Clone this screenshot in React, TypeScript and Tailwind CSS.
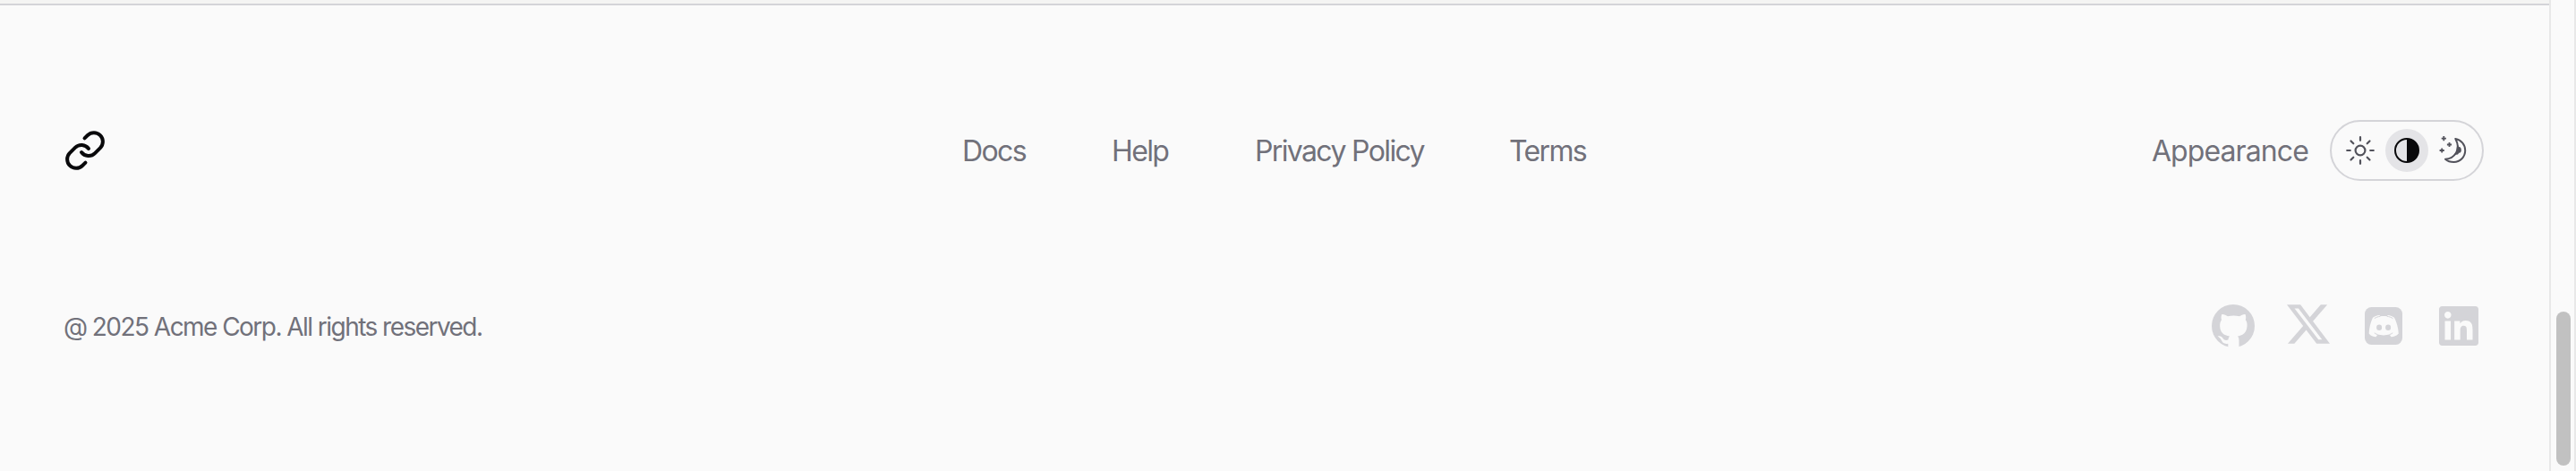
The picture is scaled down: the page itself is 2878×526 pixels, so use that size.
const links = [
  { label: "Docs", cls: "w-[70px] mr-[97px]" },
  { label: "Help", cls: "w-[64px] mr-[96px]" },
  { label: "Privacy Policy", cls: "w-[188px] mr-[96px]" },
  { label: "Terms", cls: "w-[83px]" },
];

function Sun() {
  return (
    <svg viewBox="0 0 32 32" className="size-8" fill="none" stroke="currentColor" strokeWidth="2.2" strokeLinecap="round">
      <circle cx="16" cy="16" r="5.4" />
      <path d="M16 1.200v3.600M16 27.200v3.600M1.200 16h3.600M27.200 16h3.600M5.500 5.500l2.800 2.800M23.700 23.700l2.800 2.800M5.500 26.500l2.800-2.800M23.700 8.300l2.800-2.800" />
    </svg>
  );
}

function Contrast() {
  return (
    <svg viewBox="0 0 32 32" className="size-8">
      <circle cx="16" cy="16" r="13" fill="none" stroke="currentColor" strokeWidth="2" />
      <path d="M16 3a13 13 0 0 1 0 26z" fill="currentColor" />
    </svg>
  );
}

function Moon() {
  return (
    <svg viewBox="0 0 32 32" className="size-8" fill="none" stroke="currentColor" strokeWidth="2" strokeLinejoin="round" strokeLinecap="round">
      <path d="M18.300 3C25 4.500 29.200 9.800 29.200 16C29.200 23.300 23.500 29 16.500 29C13 29 9.500 28 7 25.700C12 25.500 16.500 23 19 18.800C21.500 14.500 21.300 8.500 18.300 3Z" />
      <path d="M20.500 9L22.200 12C24 12 25.200 14 24.800 16.500C24.500 18.500 23 19 22 18.800C21.500 21 20 21 19 20.500L14 24.500L19 18Z" fill="currentColor" stroke="none" />
      <path d="M5.300 0v5.200M2.700 2.600h5.200M11.500 6.900v5.200M8.900 9.500h5.200M3.200 13.400v5.200M.6 16h5.200" strokeWidth="1.800" strokeLinecap="butt" />
    </svg>
  );
}

function Github() {
  return (
    <svg viewBox="0 0 48 48" className="size-12">
      <circle cx="24" cy="24" r="24" fill="currentColor" />
      <path
        d="M11.300 11C13.500 10.600 15.800 12 18 13.300C22 12.200 27 12.200 31 13.300C33.200 12 35.500 10.600 37.500 11C38.500 13.300 38.300 15.500 37.800 17.200C39.500 19.200 39.800 21.500 39.500 24.500C39 31.500 35 34.500 29 35.400C30.200 36.800 30.500 38.500 30.500 40.500V48H18.300V43.700C13.800 44.500 11.800 42.500 10.700 39.800C9.700 37.500 8 36.700 6.600 35.500C9.500 34.700 11.500 36 12.700 38C14.200 40.300 16.200 40.300 18.400 39.500C18.600 37.700 19.200 36.400 20 35.400C13.500 34.600 9.500 31.500 9.200 24.500C9 21.500 9.600 19.200 11 17.200C10.400 15.500 10.400 13.300 11.300 11Z"
        fill="#fafafa"
      />
    </svg>
  );
}

function XLogo() {
  return (
    <svg viewBox="0 0 24 24" className="-mt-1 size-12" fill="currentColor">
      <path d="M18.901 1.153h3.680l-8.040 9.190L24 22.846h-7.406l-5.800-7.584-6.638 7.584H.474l8.600-9.830L0 1.154h7.594l5.243 6.932ZM17.610 20.644h2.039L6.486 3.240H4.298Z" />
    </svg>
  );
}

function Discord() {
  return (
    <svg viewBox="0 0 48 48" className="size-12">
      <rect x="3" y="3" width="42" height="42" rx="7.500" fill="currentColor" />
      <path
        d="M19.500 12C16.500 12.200 13.700 13.300 12 14.700C9.500 19.500 7.800 26.500 7.700 32.500C9.500 35 12.500 36.200 15.500 36.300L17.400 33.600C21.500 34.700 26.500 34.700 30.600 33.600L32.500 36.300C35.500 36.200 38.500 35 40.800 32.500C40.500 26.500 38.700 19.500 36 14.700C34.300 13.300 31.500 12.200 28.700 12L27.900 13.300C25.500 12.900 22.700 12.900 20.300 13.300Z"
        fill="#fafafa"
      />
      <path d="M13.800 15.600C15.800 14.300 17.900 13.600 20.300 13.300M34.400 15.600C32.400 14.300 30.300 13.600 27.900 13.300M13.800 31.800C15 32.700 16.200 33.300 17.400 33.600M34.200 31.800C33 32.700 31.800 33.300 30.600 33.600" fill="none" stroke="currentColor" strokeWidth="1" />
      <ellipse cx="19.100" cy="25.800" rx="3" ry="3.300" fill="currentColor" />
      <ellipse cx="29.100" cy="25.800" rx="3" ry="3.300" fill="currentColor" />
    </svg>
  );
}

function Linkedin() {
  return (
    <svg viewBox="0 0 24 24" className="mx-0.5 size-11" fill="currentColor">
      <path d="M20.447 20.452h-3.554v-5.569c0-1.328-.027-3.037-1.852-3.037-1.853 0-2.136 1.445-2.136 2.939v5.667H9.351V9h3.414v1.561h.046c.477-.9 1.637-1.850 3.370-1.850 3.601 0 4.267 2.370 4.267 5.455v6.286zM5.337 7.433c-1.144 0-2.063-.926-2.063-2.065 0-1.138.92-2.063 2.063-2.063 1.140 0 2.064.925 2.064 2.063 0 1.139-.925 2.065-2.064 2.065zm1.782 13.019H3.555V9h3.564v11.452zM22.225 0H1.771C.792 0 0 .774 0 1.729v20.542C0 23.227.792 24 1.771 24h20.451C23.200 24 24 23.227 24 22.271V1.729C24 .774 23.200 0 22.222 0h.003z" />
    </svg>
  );
}

export default function App() {
  return (
    <div className="flex h-[526px] w-[2878px] overflow-hidden bg-[#fafafa] font-['Inter','Liberation_Sans',sans-serif] text-[#71717a]">
      <div className="flex w-[2848px] flex-col">
        <div className="h-[6px] shrink-0 border-b-2 border-[#d4d4d8] bg-[#f4f4f3]" />
        <footer className="flex flex-col pr-[73px] pl-[71px]">
          <div className="mt-[128px] flex h-[68px] items-center text-[32px] leading-[48px]">
            <svg viewBox="0 0 24 24" className="size-12 text-[#09090b]" fill="none" stroke="currentColor" strokeWidth="2" strokeLinecap="round" strokeLinejoin="round">
              <path d="M10 13a5 5 0 0 0 7.540.54l3-3a5 5 0 0 0-7.070-7.070l-1.720 1.710" />
              <path d="M14 11a5 5 0 0 0-7.540-.54l-3 3a5 5 0 0 0 7.070 7.070l1.710-1.710" />
            </svg>
            <nav className="ml-[956px] flex pt-0.5 tracking-[-0.051em]">
              {links.map((l) => (
                <a key={l.label} className={"whitespace-nowrap " + l.cls}>{l.label}</a>
              ))}
            </nav>
            <div className="ml-auto flex items-center">
              <span className="mr-[24px] pt-0.5 tracking-[-0.028em] whitespace-nowrap">Appearance</span>
              <div className="flex gap-1 rounded-full border-2 border-[#d4d4d8] p-2 text-[#52525b]">
                <button className="flex size-12 items-center justify-center rounded-full"><Sun /></button>
                <button className="flex size-12 items-center justify-center rounded-full bg-[#e4e4e7] text-[#09090b]"><Contrast /></button>
                <button className="flex size-12 items-center justify-center rounded-full"><Moon /></button>
              </div>
            </div>
          </div>
          <div className="mt-[138px] flex h-12 items-center text-[28px] leading-[40px]">
            <p className="pt-0.5 tracking-[-0.055em] whitespace-nowrap">@ 2025 Acme Corp. All rights reserved.</p>
            <div className="mr-1 ml-auto flex items-center gap-9 text-[#d4d4d8]">
              <Github />
              <XLogo />
              <Discord />
              <Linkedin />
            </div>
          </div>
        </footer>
      </div>
      <div className="flex w-[30px] justify-center border-x-2 border-[#e8e8e8] pt-[348px] pl-0.5">
        <div className="h-[172px] w-4 rounded-full bg-[#c1c1c1]" />
      </div>
    </div>
  );
}
